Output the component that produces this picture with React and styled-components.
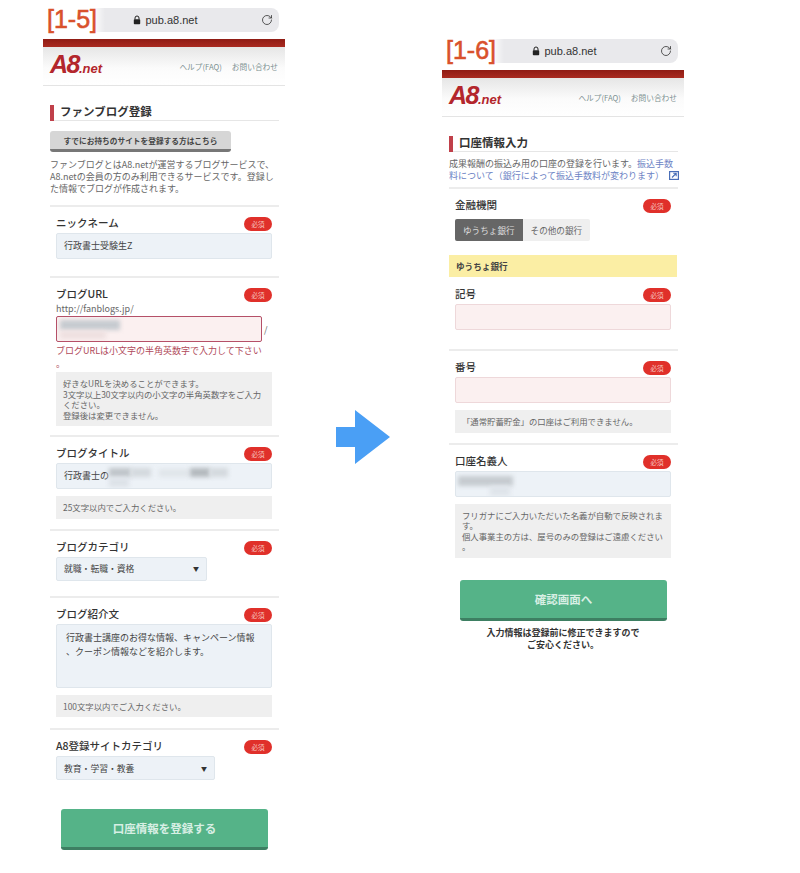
import React from 'react';
import styled, { createGlobalStyle } from 'styled-components';
import { RotateCw } from 'lucide-react';

const GlobalStyle = createGlobalStyle`
  html, body { margin: 0; padding: 0; background: #fff; }
  body { font-family: "Noto Sans CJK JP", "Noto Sans", sans-serif; color: #444; }
  * { box-sizing: border-box; }
`;

const Page = styled.div`
  display: flex;
  align-items: flex-start;
  width: 800px;
  height: 873px;
  overflow: hidden;
  padding-left: 43px;
`;

const Phone = styled.div`
  position: relative;
  width: 242px;
  flex: none;
  margin-top: ${(p) => p.$top}px;
`;

const UrlBar = styled.div`
  display: flex;
  align-items: center;
  justify-content: center;
  gap: 5px;
  position: relative;
  height: 24px;
  margin-bottom: 7px;
  margin-right: 6px;
  background: #e9e9ec;
  border-radius: 8px;
  font-family: "Liberation Sans", sans-serif;
  font-size: 11px;
  color: #333;
  padding-left: 8px;
`;

const Step = styled.span`
  position: absolute;
  left: 0;
  top: -3px;
  width: 62px;
  height: 30px;
  background: linear-gradient(90deg, #fff 80%, rgba(255, 255, 255, 0));
  font-family: "Liberation Sans", sans-serif;
  font-size: 25px;
  line-height: 28px;
  color: #d9512c;
  padding-left: 4px;
  -webkit-text-stroke: 0.6px #d9512c;
`;

const Reload = styled.span`
  position: absolute;
  right: 6px;
  top: 6px;
  display: flex;
  color: #333;
`;

const RedBar = styled.div`
  height: 8px;
  background: linear-gradient(#8f1c14, #a92a20);
`;

const Header = styled.div`
  display: flex;
  align-items: center;
  justify-content: space-between;
  height: 39px;
  padding: 0 7px;
  background: linear-gradient(#e6e6e6, #fbfbfb 55%, #fff);
  border-bottom: 1px solid #e4e4e4;
`;

const Logo = styled.div`
  font-family: "Liberation Sans", sans-serif;
  font-style: italic;
  font-weight: 700;
  font-size: 25px;
  line-height: 26px;
  color: #b3262c;
  letter-spacing: -1.5px;
  span { font-size: 13px; letter-spacing: 0; }
`;

const Nav = styled.nav`
  display: flex;
  gap: 10px;
  font-size: 7.7px;
  color: #7b9090;
`;

const Title = styled.h2`
  position: relative;
  margin: 19px 6px 0 7px;
  padding-left: 10px;
  height: 15px;
  font-size: 11.5px;
  line-height: 13px;
  font-weight: 700;
  color: #333;
  box-shadow: 0 1px 0 #e6e6e6;
  &::before {
    content: "";
    position: absolute;
    left: 0;
    top: 0;
    width: 4px;
    height: 16px;
    background: #c0404a;
  }
`;

const GrayButton = styled.div`
  width: 181px;
  height: 21px;
  margin: 11px 0 0 7px;
  display: flex;
  align-items: center;
  justify-content: center;
  background: #d6d6d6;
  border-bottom: 3px solid #777;
  border-radius: 3px;
  font-size: 7.7px;
  font-weight: 700;
  color: #444;
`;

const Intro = styled.p`
  margin: ${(p) => p.$top}px 6px 0 7px;
  padding-bottom: ${(p) => p.$bottom}px;
  font-size: 9px;
  line-height: 12px;
  color: #666;
  white-space: nowrap;
  a { color: #6b82c4; }
  svg { vertical-align: -1px; margin-left: 5px; }
`;

const Field = styled.section`
  margin: 0 6px 0 7px;
  padding: 8px 7px ${(p) => p.$bottom || 0}px 6px;
  border-top: ${(p) => (p.$plain ? '1px solid transparent' : '2px solid #ececec')};
`;

const LabelRow = styled.div`
  display: flex;
  justify-content: space-between;
  height: 18px;
`;

const Label = styled.label`
  font-size: 10.5px;
  line-height: 16px;
  font-weight: 500;
  color: #333;
`;

const Required = styled.span`
  width: 28px;
  height: 14px;
  margin-top: 2px;
  border-radius: 7px;
  background: #e0302a;
  color: #f6c8c0;
  font-size: 6.5px;
  line-height: 14px;
  text-align: center;
`;

const Input = styled.div`
  position: relative;
  overflow: hidden;
  width: ${(p) => p.$width || '100%'};
  height: ${(p) => p.$height || 26}px;
  padding: 0 7px;
  background: ${(p) => (p.$error ? '#fbf0f0' : '#edf2f7')};
  border: 1px solid ${(p) => (p.$strong ? '#b55068' : p.$error ? '#eed8da' : '#dfe6ec')};
  border-radius: 2px;
  font-size: 9px;
  line-height: 24px;
  color: #444;
`;

const Smudge = styled.i`
  position: absolute;
  left: ${(p) => p.$left}px;
  top: ${(p) => p.$y}px;
  width: ${(p) => p.$width}px;
  height: ${(p) => p.$height}px;
  background: ${(p) => p.$color || '#c6cbd0'};
  filter: blur(2px);
`;

const TextArea = styled(Input)`
  line-height: 14px;
  padding: 6px 9px;
  white-space: nowrap;
`;

const UrlPrefix = styled.div`
  font-size: 9px;
  line-height: 14px;
  margin-top: -2px;
  color: #666;
`;

const UrlRow = styled.div`
  display: flex;
  align-items: center;
  gap: 2px;
  font-size: 9px;
  color: #666;
`;

const ErrorText = styled.div`
  margin-top: 2px;
  font-size: 9px;
  line-height: 13px;
  color: #b04a5a;
  white-space: nowrap;
`;

const Note = styled.div`
  margin-top: ${(p) => (p.$top === undefined ? 7 : p.$top)}px;
  padding: 6px 7px;
  background: #efefef;
  font-size: 8.4px;
  line-height: 10.5px;
  color: #666;
  white-space: nowrap;
`;

const Select = styled.div`
  display: flex;
  align-items: center;
  justify-content: space-between;
  width: ${(p) => p.$width}px;
  height: 24px;
  padding: 0 7px;
  background: #edf2f7;
  border: 1px solid #dfe6ec;
  border-radius: 2px;
  font-size: 8.8px;
  color: #444;
  b { font-size: 6px; color: #333; font-weight: 400; }
`;

const Toggle = styled.div`
  display: inline-flex;
  height: 22px;
  border-radius: 2px;
  overflow: hidden;
  background: #efefef;
  font-size: 8.6px;
  line-height: 22px;
`;

const ToggleItem = styled.span`
  padding: 0 8px;
  background: ${(p) => (p.$active ? '#666' : 'transparent')};
  color: ${(p) => (p.$active ? '#ddd' : '#666')};
`;

const Yellow = styled.div`
  margin: 14px 7px 0;
  height: 22px;
  padding-left: 7px;
  background: #fbeea4;
  font-size: 8.6px;
  line-height: 22px;
  font-weight: 700;
  color: #444;
`;

const GreenButton = styled.div`
  display: flex;
  align-items: center;
  justify-content: center;
  width: 207px;
  height: 41px;
  margin: ${(p) => p.$top}px 0 0 ${(p) => p.$left}px;
  background: #55b388;
  border-bottom: 3px solid #3d7f62;
  border-radius: 3px;
  color: #d8efe4;
  font-size: 11.5px;
  font-weight: 700;
`;

const Caption = styled.p`
  margin: 6px 0 0;
  font-size: 9px;
  line-height: 12px;
  font-weight: 700;
  color: #333;
  text-align: center;
`;

const ArrowBox = styled.div`
  flex: none;
  margin: 410px 52px 0 51px;
  svg { display: block; }
`;

const LockIcon = () => (
  <svg width="8" height="10" viewBox="0 0 8 10">
    <path d="M2 4.5V3a2 2 0 0 1 4 0v1.5" fill="none" stroke="#222" strokeWidth="1" />
    <rect x="0.8" y="4.2" width="6.4" height="5" rx="0.8" fill="#222" />
  </svg>
);

const ExternalIcon = () => (
  <svg width="10" height="9" viewBox="0 0 10 9">
    <rect x="0.6" y="0.6" width="8.8" height="7.8" fill="none" stroke="#4a6fb8" strokeWidth="1.2" />
    <path d="M3 6.5L7 2.5M4.2 2.3H7.2V5.3" fill="none" stroke="#4a6fb8" strokeWidth="1.1" />
  </svg>
);

const Chrome = ({ step, children }) => (
  <>
    <UrlBar>
      <Step>{step}</Step>
      <LockIcon />
      pub.a8.net
      <Reload><RotateCw size={12} strokeWidth={1.6} /></Reload>
    </UrlBar>
    <RedBar />
    <Header>
      <Logo>A8<span>.net</span></Logo>
      <Nav><span>ヘルプ(FAQ)</span><span>お問い合わせ</span></Nav>
    </Header>
    {children}
  </>
);

const Head = ({ children }) => (
  <LabelRow>
    <Label>{children}</Label>
    <Required>必須</Required>
  </LabelRow>
);

const App = () => (
  <Page>
    <GlobalStyle />
    <Phone $top={8}>
      <Chrome step="[1-5]">
        <Title>ファンブログ登録</Title>
        <GrayButton>すでにお持ちのサイトを登録する方はこちら</GrayButton>
        <Intro $top={7} $bottom={10}>
          ファンブログとはA8.netが運営するブログサービスで、<br />
          A8.netの会員の方のみ利用できるサービスです。登録し<br />
          た情報でブログが作成されます。
        </Intro>
        <Field $bottom={17}>
          <Head>ニックネーム</Head>
          <Input>行政書士受験生Z</Input>
        </Field>
        <Field $bottom={9}>
          <Head>ブログURL</Head>
          <UrlPrefix>http://fanblogs.jp/</UrlPrefix>
          <UrlRow>
            <Input $error $strong $width="206px">
              <Smudge $left={3} $y={3} $width={60} $height={10} />
              <Smudge $left={3} $y={14} $width={46} $height={8} $color="#eee0e0" />
            </Input>
            /
          </UrlRow>
          <ErrorText>ブログURLは小文字の半角英数字で入力して下さい<br />。</ErrorText>
          <Note $top={2}>
            好きなURLを決めることができます。<br />
            3文字以上30文字以内の小文字の半角英数字をご入力<br />
            ください。<br />
            登録後は変更できません。
          </Note>
        </Field>
        <Field $bottom={10}>
          <Head>ブログタイトル</Head>
          <Input>
            行政書士の
            <Smudge $left={52} $y={4} $width={22} $height={9} $color="#c0c5ca" />
            <Smudge $left={74} $y={4} $width={20} $height={9} $color="#d4d9de" />
            <Smudge $left={52} $y={14} $width={20} $height={9} $color="#dde2e8" />
            <Smudge $left={102} $y={5} $width={30} $height={8} $color="#e0e5ea" />
            <Smudge $left={133} $y={4} $width={20} $height={9} $color="#b4b9be" />
            <Smudge $left={153} $y={4} $width={18} $height={9} $color="#d4d9de" />
          </Input>
          <Note>25文字以内でご入力ください。</Note>
        </Field>
        <Field $bottom={15}>
          <Head>ブログカテゴリ</Head>
          <Select $width={151}>就職・転職・資格<b>▼</b></Select>
        </Field>
        <Field $bottom={11}>
          <Head>ブログ紹介文</Head>
          <TextArea $height={64}>
            行政書士講座のお得な情報、キャンペーン情報<br />
            、クーポン情報などを紹介します。
          </TextArea>
          <Note>100文字以内でご入力ください。</Note>
        </Field>
        <Field>
          <Head>A8登録サイトカテゴリ</Head>
          <Select $width={159}>教育・学習・教養<b>▼</b></Select>
        </Field>
        <GreenButton $top={29} $left={18}>口座情報を登録する</GreenButton>
      </Chrome>
    </Phone>

    <ArrowBox>
      <svg width="54" height="54" viewBox="0 0 54 54">
        <path d="M0 17H19V0L54 27L19 54V37H0Z" fill="#4a9ff5" />
      </svg>
    </ArrowBox>

    <Phone $top={39}>
      <Chrome step="[1-6]">
        <Title>口座情報入力</Title>
        <Intro $top={7} $bottom={5}>
          成果報酬の振込み用の口座の登録を行います。<a>振込手数</a><br />
          <a>料について（銀行によって振込手数料が変わります）</a>
          <ExternalIcon />
        </Intro>
        <Field>
          <Head>金融機関</Head>
          <Toggle>
            <ToggleItem $active>ゆうちょ銀行</ToggleItem>
            <ToggleItem>その他の銀行</ToggleItem>
          </Toggle>
        </Field>
        <Yellow>ゆうちょ銀行</Yellow>
        <Field $plain $bottom={19}>
          <Head>記号</Head>
          <Input $error />
        </Field>
        <Field $bottom={10}>
          <Head>番号</Head>
          <Input $error />
          <Note>「通常貯蓄貯金」の口座はご利用できません。</Note>
        </Field>
        <Field>
          <Head>口座名義人</Head>
          <Input>
            <Smudge $left={2} $y={4} $width={55} $height={10} />
            <Smudge $left={34} $y={14} $width={20} $height={10} $color="#dfe4ea" />
          </Input>
          <Note>
            フリガナにご入力いただいた名義が自動で反映されま<br />
            す。<br />
            個人事業主の方は、屋号のみの登録はご遠慮ください<br />
            。
          </Note>
        </Field>
        <GreenButton $top={22} $left={18}>確認画面へ</GreenButton>
        <Caption>入力情報は登録前に修正できますので<br />ご安心ください。</Caption>
      </Chrome>
    </Phone>
  </Page>
);

export default App;
